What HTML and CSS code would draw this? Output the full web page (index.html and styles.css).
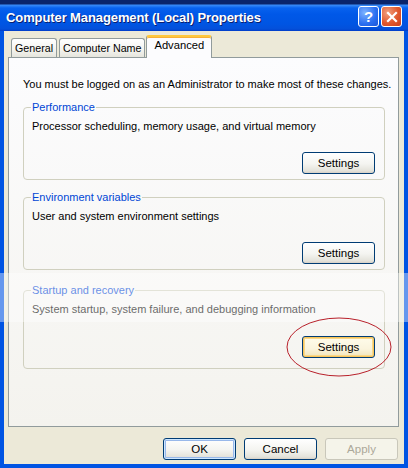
FILE: index.html
```html
<!DOCTYPE html>
<html>
<head>
<meta charset="utf-8">
<link rel="stylesheet" href="styles.css">
</head>
<body>
<div class="window">
  <div class="titlebar">
    <span class="title">Computer Management (Local) Properties</span>
    <div class="tb-buttons">
      <span class="tb-btn help">?</span>
      <span class="tb-btn close">
        <svg width="12" height="12" viewBox="0 0 12 12"><path d="M2 2 L10 10 M10 2 L2 10" stroke="#fff" stroke-width="2.2" stroke-linecap="square"/></svg>
      </span>
    </div>
  </div>
  <div class="client">
    <div class="tabs">
      <span class="tab">General</span>
      <span class="tab">Computer Name</span>
      <span class="tab active">Advanced</span>
    </div>
    <div class="panel">
      <p class="intro">You must be logged on as an Administrator to make most of these changes.</p>
      <fieldset class="group first">
        <legend>Performance</legend>
        <p class="desc">Processor scheduling, memory usage, and virtual memory</p>
        <div class="row"><button class="btn">Settings</button></div>
      </fieldset>
      <fieldset class="group second">
        <legend>Environment variables</legend>
        <p class="desc">User and system environment settings</p>
        <div class="row"><button class="btn">Settings</button></div>
      </fieldset>
      <fieldset class="group tall">
        <legend>Startup and recovery</legend>
        <p class="desc">System startup, system failure, and debugging information</p>
        <div class="row"><button class="btn focus">Settings</button></div>
      </fieldset>
    </div>
    <div class="footer">
      <button class="btn default">OK</button>
      <button class="btn">Cancel</button>
      <button class="btn" disabled>Apply</button>
    </div>
  </div>
  <div class="watermark"></div>
  <svg class="circle" width="110" height="64" viewBox="0 0 110 64"><ellipse cx="55" cy="31" rx="52" ry="29" fill="none" stroke="#B8202A" stroke-width="1"/></svg>
</div>
</body>
</html>
```

FILE: styles.css
```css
html, body {
  margin: 0;
  padding: 0;
}
body {
  width: 408px;
  height: 468px;
  overflow: hidden;
  font-family: "Liberation Sans", Arial, sans-serif;
  font-size: 11px;
  color: #000;
}
.window {
  position: relative;
  width: 408px;
  height: 468px;
  background: #0054E3;
  display: flex;
  flex-direction: column;
}
.titlebar {
  height: 31px;
  flex: none;
  display: flex;
  align-items: center;
  justify-content: space-between;
  padding: 0 6px 0 6px;
  box-sizing: border-box;
  background: linear-gradient(#0A246A 0, #0A246A 4px, #3A8CF7 5px, #0862EE 8px, #0058E8 14px, #0055E3 24px, #0450DA 29px, #003BC8 31px);
}
.title {
  color: #fff;
  font-family: "Liberation Sans", Arial, sans-serif;
  font-weight: bold;
  font-size: 13px;
  letter-spacing: -0.1px;
  padding-top: 3px;
  text-shadow: 1px 1px 0 #0A1E6E;
}
.tb-buttons {
  display: flex;
  gap: 2px;
  padding-top: 2px;
}
.tb-btn {
  width: 19px;
  height: 19px;
  border: 1px solid #fff;
  border-radius: 3px;
  display: flex;
  align-items: center;
  justify-content: center;
  color: #fff;
  font-family: "Liberation Sans", sans-serif;
  font-weight: bold;
  font-size: 15px;
}
.help {
  background: radial-gradient(circle at 30% 30%, #7EB2FF, #2A6EF0 60%, #1B55D8);
}
.close {
  background: radial-gradient(circle at 30% 30%, #F0A080, #E0582E 55%, #C8401E);
}
.client {
  flex: 1;
  margin: 0 4px 4px 4px;
  background: #ECE9D8;
  padding: 5px 5px 0 4px;
  display: flex;
  flex-direction: column;
}
.tabs {
  display: flex;
  align-items: flex-end;
  height: 21px;
  padding-left: 3px;
  position: relative;
  z-index: 1;
}
.tab {
  height: 18px;
  line-height: 18px;
  padding: 0 3px;
  margin-right: 2px;
  border: 1px solid #919B9C;
  border-bottom: none;
  border-radius: 3px 3px 0 0;
  background: linear-gradient(#FFFFFF, #F3F3EF 60%, #E6E5DD);
  color: #000;
  font-size: 10.7px;
  white-space: nowrap;
}
.tab.active {
  margin-right: 0;
  margin-left: -1px;
  padding: 0 7px;
  background: #FCFCFE;
  border-top: 2px solid #FFC83C;
  box-shadow: inset 0 1px 0 #F7B13A;
  margin-bottom: -1px;
  height: 21px;
  line-height: 17px;
  font-size: 11.2px;
}
.panel {
  height: 370px;
  box-sizing: border-box;
  border: 1px solid #919B9C;
  background: linear-gradient(#FCFCFE, #F4F3EE);
  padding: 20px 13px 0 14px;
  display: flex;
  flex-direction: column;
}
.intro {
  margin: 0 0 10px 0;
  line-height: 13px;
  white-space: nowrap;
}
.group {
  margin: 0;
  padding: 0 9px 5px 8px;
  border: 1px solid #D0D0BF;
  border-radius: 4px;
  min-inline-size: 0;
}
.group.first {
  margin-bottom: 11px;
}
.group.second {
  margin-bottom: 14px;
}
.group legend {
  padding: 0 1px;
  margin-left: -1px;
  color: #0046D5;
  line-height: 13px;
}
.desc {
  margin: 6px 0 0 0;
  line-height: 13px;
}
.row {
  display: flex;
  justify-content: flex-end;
  margin-top: 19px;
}
.tall .row {
  margin-top: 20px;
  padding-bottom: 5px;
}
.btn {
  width: 73px;
  height: 22px;
  box-sizing: border-box;
  border: 1px solid #003C74;
  border-radius: 3px;
  background: linear-gradient(#FFFFFF, #F4F4F0 55%, #E3E2DA 90%, #D6D0C5);
  font-family: "Liberation Sans", Arial, sans-serif;
  font-size: 11.5px;
  color: #000;
  padding: 0;
}
.btn.focus {
  box-shadow: inset 0 0 0 1px #F9C55A, inset 0 0 0 2px #F8D88B;
  background: linear-gradient(#FFFCEB, #FAF4DD 60%, #F1E4B8);
}
.btn.default {
  box-shadow: inset 0 0 0 1px #CEE7FF, inset 0 0 0 2px #98B8EA;
}
.btn:disabled {
  border-color: #C9C7BA;
  color: #ACA899;
  background: #F5F4EA;
}
.footer {
  flex: 1;
  display: flex;
  justify-content: flex-end;
  gap: 8px;
  padding-top: 11px;
  padding-right: 1px;
}
.watermark {
  position: absolute;
  left: 0;
  top: 273px;
  width: 408px;
  height: 49px;
  background: rgba(255, 255, 255, 0.4);
  pointer-events: none;
}
.circle {
  position: absolute;
  left: 284px;
  top: 316px;
}
```
